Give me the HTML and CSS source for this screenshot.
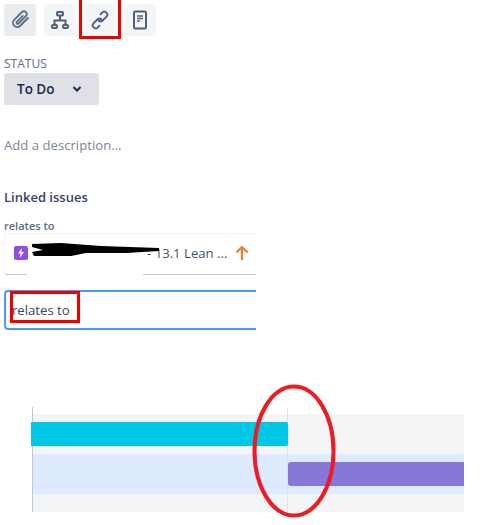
FILE: index.html
```html
<!DOCTYPE html>
<html lang="en">
<head>
    <meta charset="UTF-8">
    <title>Issue detail</title>
    <link rel="stylesheet" href="styles.css">
</head>
<body>
    <div class="panel">
        <div class="toolbar">
            <button class="tool tool-active">
                <svg width="24" height="24" viewBox="0 0 24 24" fill="none" stroke="#5e6c84" stroke-width="1.800" stroke-linecap="round"><path d="M20 10l-8 8a4.250 4.250 0 0 1-6-6l8-8a2.830 2.830 0 0 1 4 4l-7.500 7.500a1.200 1.200 0 0 1-1.700-1.700l6-6"/></svg>
            </button>
            <button class="tool">
                <svg width="20" height="20" viewBox="0 0 20 20" fill="none" stroke="#505f79" stroke-width="2"><rect x="7" y="2" width="6" height="3.500" rx="1"/><rect x="2" y="15" width="5" height="3" rx="1"/><rect x="13" y="15" width="5" height="3" rx="1"/><path d="M10 5.500V10M4.500 15v-4.500h11V15"/></svg>
            </button>
            <button class="tool">
                <svg width="24" height="24" viewBox="0 0 24 24" fill="none" stroke="#505f79" stroke-width="1.800" stroke-linecap="round"><path d="M10.500 12.500a3 3 0 0 0 4.200 0l4-4a3 3 0 0 0-4.200-4.200l-2 2"/><path d="M13.500 11.500a3 3 0 0 0-4.200 0l-4 4a3 3 0 0 0 4.200 4.200l2-2"/></svg>
            </button>
            <button class="tool">
                <svg width="20" height="20" viewBox="0 0 20 20" fill="none" stroke="#505f79"><rect x="4" y="1.500" width="12" height="17" rx="1.500" stroke-width="2"/><path d="M7 6h6M7 8.500h6M7 11h3" stroke-width="1.500"/></svg>
            </button>
            <span class="mark mark-tool"></span>
        </div>

        <div class="field-label">STATUS</div>
        <button class="status">To Do
            <svg width="10" height="8" viewBox="0 0 10 8" fill="none" stroke="#172b4d" stroke-width="2"><path d="M1.500 2l3.500 3.500L8.500 2"/></svg>
        </button>

        <p class="description">Add a description...</p>

        <h2 class="section-title">Linked issues</h2>
        <div class="link-type">relates to</div>
        <div class="issue-card">
            <span class="epic-icon">
                <svg width="8" height="10" viewBox="0 0 8 10"><path d="M5 0L1 5.500h2.500L2.700 10 7 4H4.300z" fill="#fff"/></svg>
            </span>
            <span class="issue-text">- 13.1 Lean ...</span>
            <svg class="priority" width="14" height="16" viewBox="0 0 14 16" fill="none" stroke="#e97f33" stroke-width="2.200"><path d="M7 15V2M1.500 7.500L7 2l5.500 5.500"/></svg>
            <svg class="scribble" width="130" height="14" viewBox="0 0 130 14"><path d="M1 1L30 0L70 3L128 5V8L95 10L55 10L40 13L3 13L1 9L12 7L1 4Z" fill="#000"/></svg>
            <span class="card-patch"></span>
        </div>
        <div class="link-input">
            <span>relates to</span>
            <span class="mark mark-input"></span>
        </div>
    </div>

    <div class="gantt">
        <div class="gantt-row">
            <div class="bar bar-story"></div>
        </div>
        <div class="gantt-row gantt-row-selected">
            <div class="bar bar-epic"></div>
        </div>
        <div class="gantt-foot"></div>
        <span class="gridline gridline-first"></span>
        <span class="gridline gridline-second"></span>
        <svg class="circle" width="84" height="134" viewBox="0 0 84 134" fill="none"><ellipse cx="42" cy="67" rx="39.500" ry="64.500" stroke="#ed1c24" stroke-width="4"/></svg>
    </div>
</body>
</html>
```

FILE: styles.css
```css
html, body {
    margin: 0;
    padding: 0;
    background-color: #fff;
}
body {
    font-family: "Open Sans", Arial, sans-serif;
    color: #172b4d;
    width: 493px;
    height: 525px;
    overflow: hidden;
}
.panel {
    width: 252px;
    padding: 4px 0 0 4px;
}
.toolbar {
    display: flex;
    gap: 8px;
    position: relative;
}
.tool {
    width: 32px;
    height: 32px;
    padding: 0;
    border: none;
    border-radius: 3px;
    background-color: #f4f5f7;
    display: flex;
    align-items: center;
    justify-content: center;
}
.tool-active {
    background-color: #ebecf0;
}
.mark {
    position: absolute;
    border: 3px solid #f00000;
    box-sizing: border-box;
}
.mark-tool {
    left: 75px;
    top: -8px;
    width: 42px;
    height: 43px;
    border-top: none;
}
.field-label {
    margin-top: 20px;
    font-size: 12px;
    line-height: 16px;
    color: #5e6c84;
}
.status {
    margin-top: 1px;
    width: 95px;
    height: 32px;
    padding: 0 0 0 13px;
    border: none;
    border-radius: 3px;
    background-color: #dfe1e6;
    color: #172b4d;
    font-family: inherit;
    font-size: 13.500px;
    font-weight: 600;
    display: flex;
    align-items: center;
    gap: 17px;
}
.description {
    margin: 30px 0 0;
    font-size: 13.150px;
    line-height: 20px;
    color: #7a869a;
}
.section-title {
    margin: 32px 0 0;
    font-size: 13px;
    line-height: 20px;
    font-weight: 600;
    color: #344563;
}
.link-type {
    margin-top: 11px;
    font-size: 11px;
    line-height: 16px;
    font-weight: 600;
    color: #5e6c84;
}
.issue-card {
    position: relative;
    height: 42px;
    margin-top: -1px;
    padding: 0 0 2px 9px;
    box-sizing: border-box;
    border: 1px solid #f4f5f7;
    border-right: none;
    border-bottom: 1px solid #c1c7d0;
    border-radius: 3px 0 0 3px;
    display: flex;
    align-items: center;
    font-size: 13.150px;
    color: #42526e;
}
.epic-icon {
    width: 14px;
    height: 14px;
    border-radius: 2px;
    background-color: #904ee2;
    display: flex;
    align-items: center;
    justify-content: center;
}
.issue-text {
    margin-left: 119px;
    white-space: nowrap;
}
.priority {
    margin-left: 8px;
}
.scribble {
    position: absolute;
    left: 26px;
    top: 9px;
}
.card-patch {
    position: absolute;
    left: 22px;
    bottom: -2px;
    width: 116px;
    height: 3px;
    background-color: #fff;
}
.link-input {
    position: relative;
    margin-top: 15px;
    height: 40px;
    box-sizing: border-box;
    border: 2px solid #4c9aff;
    border-right: none;
    border-radius: 4px 0 0 4px;
    display: flex;
    align-items: center;
    padding-left: 6px;
    font-size: 13.150px;
    color: #344563;
}
.mark-input {
    left: 4px;
    top: -1px;
    width: 70px;
    height: 32px;
}
.gantt {
    position: relative;
    width: 432px;
    margin: 77px 0 0 32px;
    padding-top: 7px;
}
.gantt-row {
    height: 40px;
    background-color: #f4f5f7;
    box-sizing: border-box;
    padding-top: 8px;
}
.gantt-row-selected {
    background-color: #deebff;
}
.gantt-foot {
    height: 18px;
    background-color: #f4f5f7;
}
.bar {
    position: relative;
    z-index: 1;
    height: 24px;
}
.bar-story {
    width: 257px;
    margin-left: -1px;
    border-radius: 0 2px 2px 0;
    background-color: #00c7e6;
}
.bar-epic {
    width: 176px;
    margin-left: 256px;
    border-radius: 3px 0 0 3px;
    background-color: #8777d9;
}
.gridline {
    position: absolute;
    top: 0;
    bottom: 0;
    width: 1px;
    background-color: #dfe1e6;
}
.gridline-first {
    left: 0;
    background-color: #c1c7d0;
}
.gridline-second {
    left: 255px;
}
.circle {
    position: absolute;
    z-index: 2;
    left: 220px;
    top: -23px;
}
```
